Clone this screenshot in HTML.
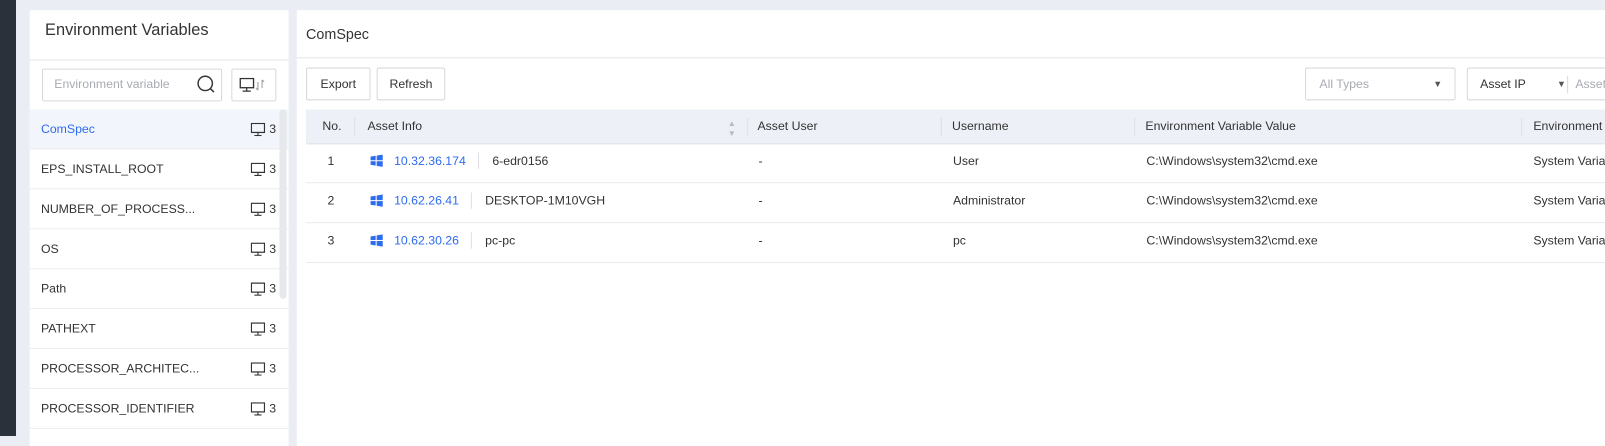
<!DOCTYPE html>
<html><head><meta charset="utf-8"><style>
*{box-sizing:border-box;margin:0;padding:0}
body{width:1605px;height:436px;overflow:hidden;background:#eaedf3;font-family:"Liberation Sans",sans-serif;font-size:12px;color:#333;position:relative}
#w{position:absolute;left:0;top:0;width:1568px;height:426px;transform:scale(1.0236);transform-origin:0 0}
.abs{position:absolute}
.strip{left:0;top:0;width:16px;height:436px;background:#2b313b}
.lp{left:29px;top:10px;width:253px;height:426px;background:#fff;overflow:hidden}
.rp{left:290px;top:10px;width:1300px;height:426px;background:#fff}
.row{position:absolute;left:0;width:253px;height:39px;border-bottom:1px solid #ebedf0;line-height:38px;padding-left:11px;font-size:12px}
.row .c{position:absolute;left:216px;top:0;color:#333}
.row .c svg{position:absolute;left:0;top:13px}
.row .c span{position:absolute;left:18px}
.btn{position:absolute;border:1px solid #d9d9d9;border-radius:2px;height:32px;line-height:30px;text-align:center;font-size:12px;background:#fff}
.th{position:absolute;top:97px;height:33px;line-height:33px;font-size:12px;color:#333}
.td{position:absolute;font-size:12px;line-height:38px;white-space:nowrap}
.sep{position:absolute;top:105px;width:1px;height:18px;background:#dde0e6}
.hl{position:absolute;left:9px;width:1306px;height:1px;background:#e8eaee}
.blue{color:#2d6bf0}
</style></head><body>
<div class="abs strip"></div>
<div id="w">
<div class="abs lp">
  <div class="abs" style="left:15px;top:11px;font-size:16px;color:#333">Environment Variables</div>
  <div class="abs" style="left:0;top:48px;width:259px;height:1px;background:#e4e6ea"></div>
  <div class="abs" style="left:12px;top:57px;width:176px;height:32px;border:1px solid #d9d9d9;border-radius:2px"></div>
  <div class="abs" style="left:24px;top:65px;color:#a8abb2;font-size:12px">Environment variable</div>
  <svg class="abs" style="left:163px;top:63px" width="20" height="20" viewBox="0 0 20 20"><circle cx="8.5" cy="8.5" r="7" fill="none" stroke="#333" stroke-width="1.4"/><path d="M13.5 13.5L17 17" stroke="#333" stroke-width="1.5"/></svg>
  <div class="abs" style="left:197px;top:57px;width:44px;height:32px;border:1px solid #d9d9d9;border-radius:2px"></div>
  <svg class="abs" style="left:205px;top:66px" width="26" height="14" viewBox="0 0 26 14"><rect x="0.7" y="0.7" width="13" height="9" fill="none" stroke="#333" stroke-width="1.3"/><path d="M7 10v3M3 13h8" stroke="#333" stroke-width="1.2"/><path d="M18 4v8M18 12l-2-2M22 2v8M22 2l2 2" stroke="#999" stroke-width="1"/></svg>
  <div class="row blue" style="top:97px;background:#f2f5fb">ComSpec<div class="c"><svg width="14" height="13" viewBox="0 0 14 13"><rect x="0.6" y="0.6" width="12.8" height="8.8" fill="none" stroke="#333" stroke-width="1.2"/><path d="M7 9.5v3M3.5 12.4h7" stroke="#333" stroke-width="1.1"/></svg><span>3</span></div></div>
  <div class="row" style="top:136px">EPS_INSTALL_ROOT<div class="c"><svg width="14" height="13" viewBox="0 0 14 13"><rect x="0.6" y="0.6" width="12.8" height="8.8" fill="none" stroke="#333" stroke-width="1.2"/><path d="M7 9.5v3M3.5 12.4h7" stroke="#333" stroke-width="1.1"/></svg><span>3</span></div></div>
  <div class="row" style="top:175px">NUMBER_OF_PROCESS...<div class="c"><svg width="14" height="13" viewBox="0 0 14 13"><rect x="0.6" y="0.6" width="12.8" height="8.8" fill="none" stroke="#333" stroke-width="1.2"/><path d="M7 9.5v3M3.5 12.4h7" stroke="#333" stroke-width="1.1"/></svg><span>3</span></div></div>
  <div class="row" style="top:214px">OS<div class="c"><svg width="14" height="13" viewBox="0 0 14 13"><rect x="0.6" y="0.6" width="12.8" height="8.8" fill="none" stroke="#333" stroke-width="1.2"/><path d="M7 9.5v3M3.5 12.4h7" stroke="#333" stroke-width="1.1"/></svg><span>3</span></div></div>
  <div class="row" style="top:253px">Path<div class="c"><svg width="14" height="13" viewBox="0 0 14 13"><rect x="0.6" y="0.6" width="12.8" height="8.8" fill="none" stroke="#333" stroke-width="1.2"/><path d="M7 9.5v3M3.5 12.4h7" stroke="#333" stroke-width="1.1"/></svg><span>3</span></div></div>
  <div class="row" style="top:292px">PATHEXT<div class="c"><svg width="14" height="13" viewBox="0 0 14 13"><rect x="0.6" y="0.6" width="12.8" height="8.8" fill="none" stroke="#333" stroke-width="1.2"/><path d="M7 9.5v3M3.5 12.4h7" stroke="#333" stroke-width="1.1"/></svg><span>3</span></div></div>
  <div class="row" style="top:331px">PROCESSOR_ARCHITEC...<div class="c"><svg width="14" height="13" viewBox="0 0 14 13"><rect x="0.6" y="0.6" width="12.8" height="8.8" fill="none" stroke="#333" stroke-width="1.2"/><path d="M7 9.5v3M3.5 12.4h7" stroke="#333" stroke-width="1.1"/></svg><span>3</span></div></div>
  <div class="row" style="top:370px">PROCESSOR_IDENTIFIER<div class="c"><svg width="14" height="13" viewBox="0 0 14 13"><rect x="0.6" y="0.6" width="12.8" height="8.8" fill="none" stroke="#333" stroke-width="1.2"/><path d="M7 9.5v3M3.5 12.4h7" stroke="#333" stroke-width="1.1"/></svg><span>3</span></div></div>
  <div class="abs" style="left:244px;top:97px;width:7px;height:185px;background:#e6e8eb;border-radius:4px"></div>
</div>
<div class="abs rp">
  <div class="abs" style="left:9px;top:15px;font-size:14px;color:#333">ComSpec</div>
  <div class="abs" style="left:0;top:46px;width:1315px;height:1px;background:#e4e6ea"></div>
  <div class="btn" style="left:9px;top:56px;width:63px">Export</div>
  <div class="btn" style="left:78px;top:56px;width:67px">Refresh</div>
  <div class="btn" style="left:985px;top:56px;width:147px;text-align:left;padding-left:13px;color:#a8abb2">All Types<span style="position:absolute;right:12px;color:#555;font-size:9px">▼</span></div>
  <div class="btn" style="left:1143px;top:56px;width:180px;text-align:left;padding-left:12px">Asset IP<span style="position:absolute;left:87px;color:#555;font-size:9px">▼</span><span style="position:absolute;left:97px;top:7px;width:1px;height:17px;background:#d9d9d9"></span><span style="position:absolute;left:105px;color:#a8abb2">Asset</span></div>
  <div class="abs" style="left:9px;top:97px;width:1306px;height:33px;background:#edf0f7"></div>
  <div class="th" style="left:25px">No.</div>
  <div class="sep" style="left:56px"></div>
  <div class="th" style="left:69px">Asset Info</div>
  <div class="th" style="left:421px;color:#bbb;font-size:8px;line-height:10px;top:106px">▲<br>▼</div>
  <div class="sep" style="left:440px"></div>
  <div class="th" style="left:450px">Asset User</div>
  <div class="sep" style="left:629px"></div>
  <div class="th" style="left:640px">Username</div>
  <div class="sep" style="left:818px"></div>
  <div class="th" style="left:829px">Environment Variable Value</div>
  <div class="sep" style="left:1196px"></div>
  <div class="th" style="left:1208px">Environment</div>
  <div class="hl" style="top:130px;background:#dde0e6"></div>
  <div class="hl" style="top:168px"></div>
  <div class="hl" style="top:207px"></div>
  <div class="hl" style="top:246px"></div>
  <div class="td" style="left:30px;top:128px">1</div>
  <div class="td" style="left:30px;top:167px">2</div>
  <div class="td" style="left:30px;top:206px">3</div>
  <svg class="abs" style="left:72px;top:141px" width="12" height="12" viewBox="0 0 12 12"><path d="M0 2l5-.8V5.5H0zM6 1l6-1v5.5H6zM0 6.5h5v4.3L0 10zM6 6.5h6V12l-6-1z" fill="#2d6bf0"/></svg>
  <svg class="abs" style="left:72px;top:180px" width="12" height="12" viewBox="0 0 12 12"><path d="M0 2l5-.8V5.5H0zM6 1l6-1v5.5H6zM0 6.5h5v4.3L0 10zM6 6.5h6V12l-6-1z" fill="#2d6bf0"/></svg>
  <svg class="abs" style="left:72px;top:219px" width="12" height="12" viewBox="0 0 12 12"><path d="M0 2l5-.8V5.5H0zM6 1l6-1v5.5H6zM0 6.5h5v4.3L0 10zM6 6.5h6V12l-6-1z" fill="#2d6bf0"/></svg>
  <div class="td blue" style="left:95px;top:128px">10.32.36.174</div>
  <div class="abs" style="left:177px;top:139px;width:1px;height:16px;background:#dde0e6"></div>
  <div class="td" style="left:191px;top:128px">6-edr0156</div>
  <div class="td blue" style="left:95px;top:167px">10.62.26.41</div>
  <div class="abs" style="left:170px;top:178px;width:1px;height:16px;background:#dde0e6"></div>
  <div class="td" style="left:184px;top:167px">DESKTOP-1M10VGH</div>
  <div class="td blue" style="left:95px;top:206px">10.62.30.26</div>
  <div class="abs" style="left:170px;top:217px;width:1px;height:16px;background:#dde0e6"></div>
  <div class="td" style="left:184px;top:206px">pc-pc</div>
  <div class="td" style="left:451px;top:128px">-</div>
  <div class="td" style="left:451px;top:167px">-</div>
  <div class="td" style="left:451px;top:206px">-</div>
  <div class="td" style="left:641px;top:128px">User</div>
  <div class="td" style="left:641px;top:167px">Administrator</div>
  <div class="td" style="left:641px;top:206px">pc</div>
  <div class="td" style="left:830px;top:128px">C:\Windows\system32\cmd.exe</div>
  <div class="td" style="left:830px;top:167px">C:\Windows\system32\cmd.exe</div>
  <div class="td" style="left:830px;top:206px">C:\Windows\system32\cmd.exe</div>
  <div class="td" style="left:1208px;top:128px">System Variable</div>
  <div class="td" style="left:1208px;top:167px">System Variable</div>
  <div class="td" style="left:1208px;top:206px">System Variable</div>
</div>
</div>
</body></html>
